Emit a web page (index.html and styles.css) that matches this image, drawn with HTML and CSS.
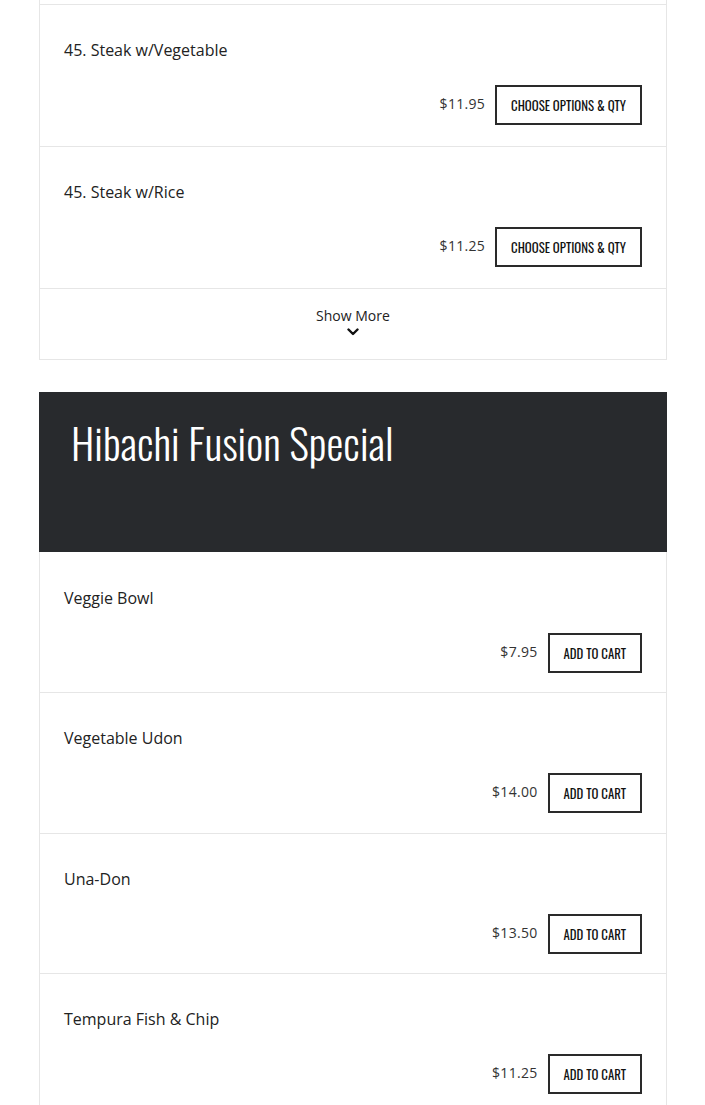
FILE: index.html
```
<!DOCTYPE html>
<html>
<head>
<meta charset="utf-8">
<link rel="stylesheet" href="styles.css">
</head>
<body>
<div class="wrap">
  <section class="card card-top">
    <div class="item">
      <div class="name">45. Steak w/Vegetable</div>
      <div class="buy"><span class="price">$11.95</span><button class="btn">Choose Options &amp; Qty</button></div>
    </div>
    <div class="item">
      <div class="name">45. Steak w/Rice</div>
      <div class="buy"><span class="price">$11.25</span><button class="btn">Choose Options &amp; Qty</button></div>
    </div>
    <div class="more">
      <span class="more-label">Show More</span>
      <svg class="chev" width="12" height="8" viewBox="0 0 12 8"><path d="M1.5 1.5 L6 6 L10.5 1.5" fill="none" stroke="#111" stroke-width="2.4" stroke-linecap="round" stroke-linejoin="round"/></svg>
    </div>
  </section>

  <section class="card card-special">
    <header class="head"><h2 class="title">Hibachi Fusion Special</h2></header>
    <div class="item tight">
      <div class="name">Veggie Bowl</div>
      <div class="buy"><span class="price">$7.95</span><button class="btn">Add to Cart</button></div>
    </div>
    <div class="item">
      <div class="name">Vegetable Udon</div>
      <div class="buy"><span class="price">$14.00</span><button class="btn">Add to Cart</button></div>
    </div>
    <div class="item tight">
      <div class="name">Una-Don</div>
      <div class="buy"><span class="price">$13.50</span><button class="btn">Add to Cart</button></div>
    </div>
    <div class="item">
      <div class="name">Tempura Fish &amp; Chip</div>
      <div class="buy"><span class="price">$11.25</span><button class="btn">Add to Cart</button></div>
    </div>
  </section>
</div>
</body>
</html>
```
FILE: styles.css
```
html, body {
  margin: 0;
  padding: 0;
  background: #fff;
}
body {
  font-family: "Open Sans", "Liberation Sans", sans-serif;
  color: #222;
  overflow: hidden;
}
.wrap {
  margin-left: 39px;
  width: 628px;
}
.card {
  border-left: 1px solid #e6e6e6;
  border-right: 1px solid #e6e6e6;
  box-sizing: border-box;
}
.card-top {
  padding-top: 4px;
  border-bottom: 1px solid #e6e6e6;
}
.item {
  border-top: 1px solid #e6e6e6;
  padding: 33px 24px 21px 24px;
}
.card-special .item {
  padding-bottom: 20px;
}
.card-special .item.tight {
  padding-bottom: 19px;
}
.name {
  font-size: 16px;
  line-height: 24px;
  color: #222;
}
.buy {
  margin-top: 23px;
  display: flex;
  justify-content: flex-end;
  align-items: center;
  gap: 10px;
}
.price {
  font-size: 14px;
  line-height: 20px;
  letter-spacing: 0.3px;
  color: #333;
  margin-top: -3px;
}
.btn {
  height: 40px;
  box-sizing: border-box;
  border: 2px solid #2a2a2a;
  background: #fff;
  padding: 0 14px;
  font-family: "Oswald", "Liberation Sans Narrow", sans-serif;
  font-weight: 400;
  font-size: 12.8px;
  text-transform: uppercase;
  color: #111;
  cursor: pointer;
}
.more {
  border-top: 1px solid #e6e6e6;
  height: 71px;
  padding-top: 17px;
  box-sizing: border-box;
  display: flex;
  flex-direction: column;
  align-items: center;
}
.more-label {
  font-size: 14px;
  line-height: 20px;
  color: #222;
}
.chev {
  display: block;
  margin-top: 2px;
}
.card-special {
  margin-top: 32px;
}
.head {
  background: #282a2d;
  height: 160px;
  margin: 0 -1px;
  padding: 22px 32px 0 32px;
  box-sizing: border-box;
}
.title {
  margin: 0;
  font-family: "Oswald", "Liberation Sans Narrow", sans-serif;
  font-weight: 300;
  font-size: 42.5px;
  line-height: 56px;
  color: #fff;
  white-space: nowrap;
}
.card-special .head + .item {
  border-top: 0;
  padding-top: 34px;
}
```
